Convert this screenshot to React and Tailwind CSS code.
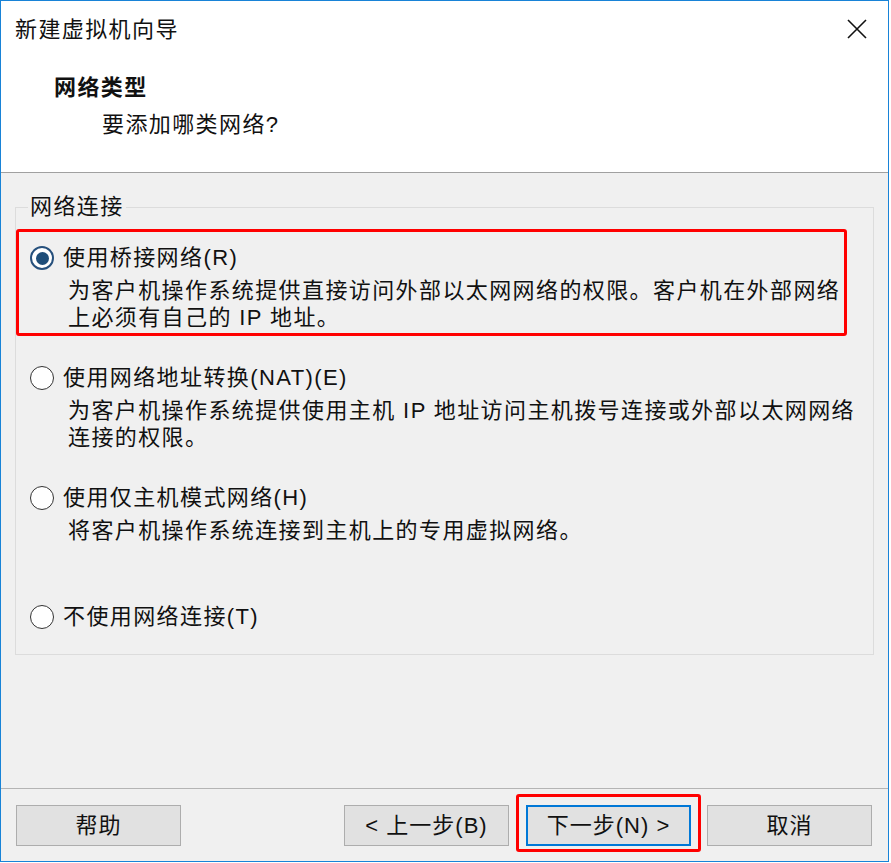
import React from "react";

const font = { fontFamily: '"Liberation Sans", "Noto Sans CJK SC", sans-serif' };

function Radio({ checked }) {
    return (
        <span
            className={
                "flex h-[24px] w-[24px] shrink-0 items-center justify-center rounded-full bg-white " +
                (checked ? "border-2 border-[#26507c]" : "border-[1.5px] border-[#333333]")
            }
        >
            {checked && <span className="h-[13px] w-[13px] rounded-full bg-[#1f4e79]" />}
        </span>
    );
}

function Option({ label, lines, checked, marked, className = "" }) {
    return (
        <div
            className={
                "rounded-[3px] border-[3px] pl-[11px] pt-[12px] pb-[2px] " +
                (marked ? "border-[#ff0000] " : "border-transparent ") +
                className
            }
        >
            <div className="flex items-center gap-[9px] leading-[28px]">
                <Radio checked={checked} />
                <span className="whitespace-nowrap">{label}</span>
            </div>
            {lines && (
                <div className="ml-[38px] mt-[5px] leading-[27px]">
                    {lines.map((l) => (
                        <div key={l} className="whitespace-nowrap">{l}</div>
                    ))}
                </div>
            )}
        </div>
    );
}

function Button({ children, primary }) {
    return (
        <button
            className={
                "h-[41px] w-[165px] bg-[#e1e1e1] text-[22px] tracking-[1px] text-[#111] " +
                (primary ? "border-2 border-[#0078d7]" : "border border-[#adadad]")
            }
        >
            {children}
        </button>
    );
}

export default function App() {
    return (
        <div className="h-[863px] w-[891px] bg-white text-[#111]" style={font}>
            <div className="flex h-[862px] w-[889px] flex-col border border-[#1883d7] text-[22px] tracking-[1.4px]">
                {/* header */}
                <div className="h-[172px] shrink-0 border-b border-[#a0a0a0] bg-white">
                    <div className="flex items-center justify-between pl-[14px] pr-[21px] pt-[15px] leading-[28px]">
                        <span>新建虚拟机向导</span>
                        <svg width="20" height="20" viewBox="0 0 20 20" className="mt-[-2px]">
                            <path d="M1 1 L19 19 M19 1 L1 19" stroke="#111" strokeWidth="1.6" fill="none" />
                        </svg>
                    </div>
                    <div className="mt-[30px] pl-[53px] font-bold leading-[28px]">网络类型</div>
                    <div className="mt-[9px] pl-[101px] leading-[28px]">要添加哪类网络?</div>
                </div>

                {/* body */}
                <div className="flex-1 bg-[#f0f0f0] pt-[20px]">
                    <fieldset className="ml-[14px] w-[859px] border border-[#dcdcdc] pb-[18px]">
                        <legend className="ml-[12px] px-[2px] leading-[28px]">网络连接</legend>
                        <div className="mt-[8px] w-[831px]">
                            <Option
                                checked
                                marked
                                label="使用桥接网络(R)"
                                lines={[
                                    "为客户机操作系统提供直接访问外部以太网网络的权限。客户机在外部网络",
                                    "上必须有自己的 IP 地址。",
                                ]}
                            />
                            <Option
                                className="mt-[13px]"
                                label="使用网络地址转换(NAT)(E)"
                                lines={[
                                    "为客户机操作系统提供使用主机 IP 地址访问主机拨号连接或外部以太网网络",
                                    "连接的权限。",
                                ]}
                            />
                            <Option
                                className="mt-[13px]"
                                label="使用仅主机模式网络(H)"
                                lines={["将客户机操作系统连接到主机上的专用虚拟网络。"]}
                            />
                            <Option className="mt-[39px]" label="不使用网络连接(T)" />
                        </div>
                    </fieldset>
                </div>

                {/* footer */}
                <div className="flex h-[73px] shrink-0 items-start justify-between border-t border-[#b4b4b4] bg-[#f0f0f0] pl-[15px] pr-[16px] pt-[16px]">
                    <Button>帮助</Button>
                    <div className="flex gap-[16px]">
                        <div className="mr-[1px]">
                            <Button>&lt; 上一步(B)</Button>
                        </div>
                        <div className="relative">
                            <Button primary>下一步(N) &gt;</Button>
                            <div className="pointer-events-none absolute bottom-[-6px] left-[-10px] right-[-10px] top-[-11px] rounded-[3px] border-[3px] border-[#ff0000]" />
                        </div>
                        <Button>取消</Button>
                    </div>
                </div>
            </div>
        </div>
    );
}
